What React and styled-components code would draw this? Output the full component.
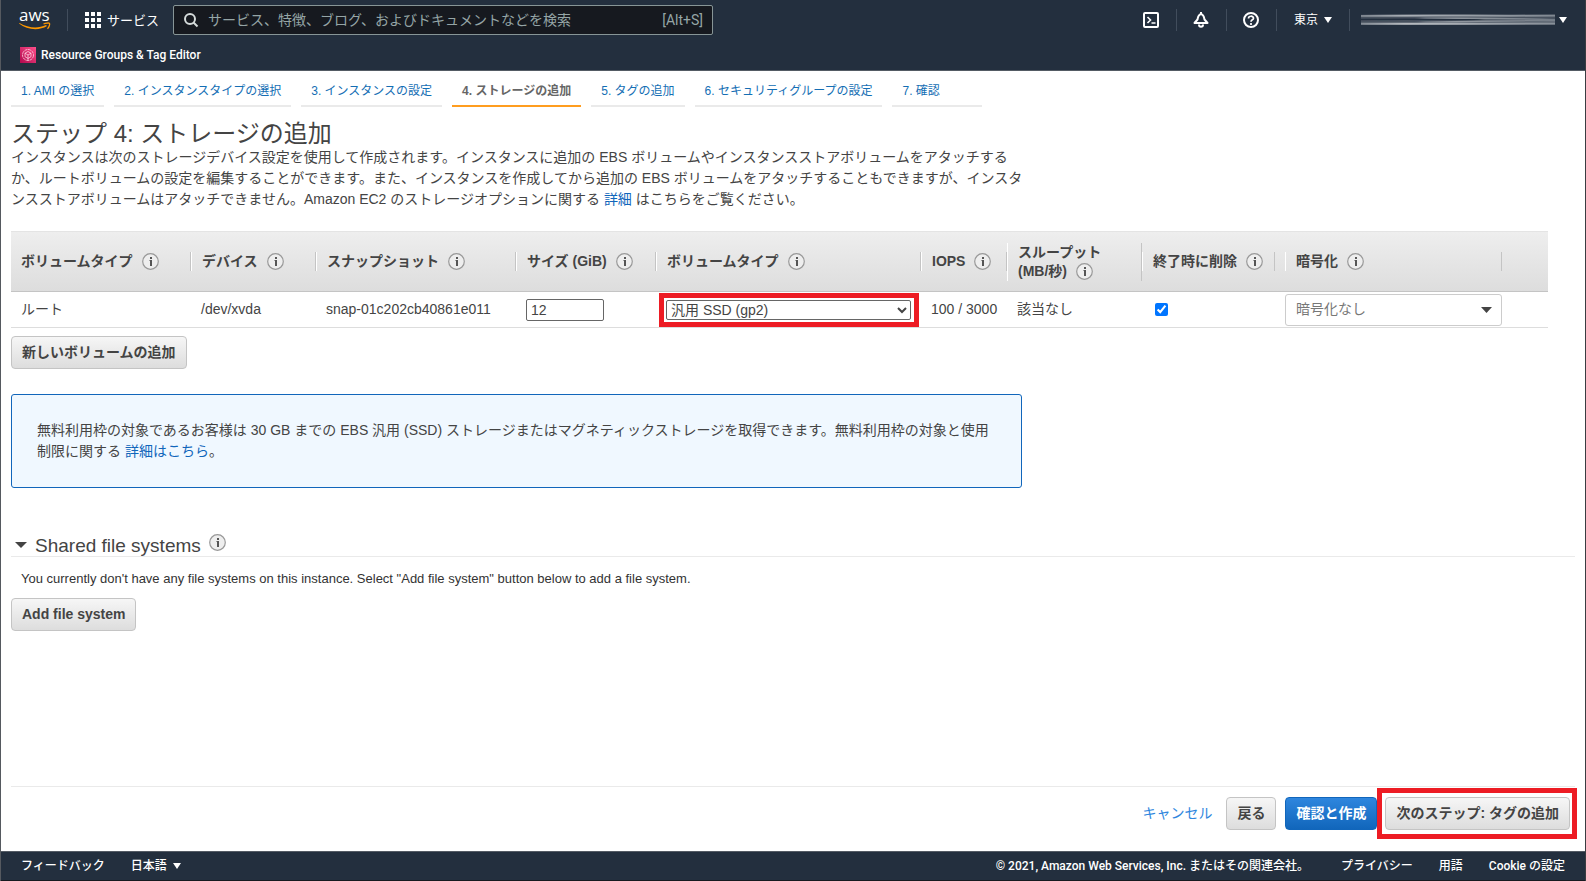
import React from 'react'
import styled, { createGlobalStyle } from 'styled-components'

const GlobalStyle = createGlobalStyle`
  * { box-sizing: border-box; }

  body {
    margin: 0;
    color: #444;
    background: #fff;
    font-family: "Liberation Sans", "Noto Sans CJK JP", sans-serif;
    font-size: 14px;
    line-height: 21px;
  }

  input, select, button { font: inherit; color: inherit; }
  a { color: #1166bb; text-decoration: none; }
  svg { display: block; flex: none; }
`

const Page = styled.div`
  display: flex;
  flex-direction: column;
  min-height: 100vh;
  border-left: 1px solid #55595f;
  border-right: 1px solid #3a3d42;
`

const navFont = 'Roboto, "Noto Sans CJK JP", sans-serif'

const Nav = styled.header`
  background: #232f3e;
  border-bottom: 1px solid #545b64;
  color: #fff;
  font-family: ${navFont};
`

const NavRow = styled.div`
  display: flex;
  align-items: center;
  height: 40px;
  padding: 0 18px;
`

const ShortcutRow = styled.div`
  display: flex;
  align-items: center;
  height: 30px;
  padding: 0 19px;
`

const Shortcut = styled.a`
  display: flex;
  align-items: center;
  gap: 5px;
  color: #fff;
  font-size: 12px;
  font-weight: 500;
`

const Divider = styled.span`
  width: 1px;
  height: 22px;
  background: #414d5c;
`

const LogoDivider = styled(Divider)`
  margin: 0 17px 0 16px;
`

const NavButton = styled.button`
  display: flex;
  align-items: center;
  gap: 6px;
  padding: 0 17px;
  border: 0;
  background: none;
  font-size: 12px;
  cursor: pointer;
`

const ServicesButton = styled(NavButton)`
  padding: 0;
  font-size: 13px;
`

const IconButton = styled(NavButton)`
  justify-content: center;
  width: 49px;
  padding: 0;
`

const AccountButton = styled(NavButton)`
  gap: 4px;
  padding: 0 0 0 11px;
`

const NavRight = styled.div`
  display: flex;
  align-items: center;
  margin-left: auto;
`

const Search = styled.label`
  display: flex;
  align-items: center;
  width: 540px;
  height: 30px;
  margin-left: 14px;
  padding: 0 9px;
  gap: 9px;
  border: 1px solid #879596;
  border-radius: 2px;
  background: #16191f;
  color: #95a5a6;
`

const SearchInput = styled.input`
  flex: 1;
  min-width: 0;
  padding: 0;
  border: 0;
  outline: 0;
  background: none;

  &::placeholder { color: #95a5a6; opacity: 1; }
`

const Steps = styled.nav`
  display: flex;
  gap: 10px;
  padding: 10px 10px 0;
  font-size: 12px;
`

const Step = styled.a`
  min-width: 90px;
  height: 26px;
  padding: 0 10px;
  border-bottom: 2px solid ${props => props.$active ? '#ff9d1f' : '#eaeaea'};
  color: ${props => props.$active ? '#666' : '#146eb4'};
  font-weight: ${props => props.$active ? 'bold' : 'normal'};
  white-space: nowrap;
`

const Main = styled.main`
  flex: 1;
  padding: 14px 10px 0;
`

const Title = styled.h1`
  margin: 0;
  font-size: 24px;
  font-weight: normal;
  line-height: 26px;
`

const Lead = styled.p`
  max-width: 1020px;
  margin: 0 0 21px;
`

const Table = styled.table`
  width: calc(100% - 27px);
  table-layout: fixed;
  border-collapse: separate;
  border-spacing: 0;
`

const Th = styled.th`
  height: 61px;
  padding: 0;
  border-top: 1px solid #e4e4e4;
  border-bottom: 1px solid #c4c4c4;
  background: linear-gradient(#eee, #ddd);
  text-align: left;
  line-height: 19px;
`

const ThLabel = styled.div`
  display: flex;
  align-items: center;
  flex-wrap: wrap;
  column-gap: 9px;
  min-height: 19px;
  margin-right: ${props => props.$gap || 0}px;
  padding-left: 10px;
  border-left: ${props => props.$first ? '0' : '1px solid #fff'};
  border-right: 1px solid #c4c4c4;
  white-space: nowrap;
`

const FullLine = styled.span`
  width: 100%;
`

const Col = styled.col`
  width: ${props => props.$width}px;
`

const Td = styled.td`
  height: 36px;
  padding: 0 0 0 ${props => props.$pad ?? 10}px;
  border-bottom: 1px solid #ddd;
`

const SizeInput = styled.input`
  display: block;
  width: 78px;
  height: 22px;
  padding: 0 4px;
  border: 1px solid #666;
  border-radius: 2px;
`

const Highlight = styled.div`
  width: fit-content;
  border: 5px solid #ed1c24;
`

const TypeHighlight = styled(Highlight)`
  width: 260px;
  height: 34px;
  padding: 2px 3px 2px 2px;
`

const TypeSelect = styled.select`
  display: block;
  width: 100%;
  height: 20px;
  padding: 0;
  border: 1px solid #666;
  border-radius: 2px;
  background: #fff;
`

const Checkbox = styled.input`
  display: block;
  width: 13px;
  height: 13px;
  margin: 0 0 0 3px;
  accent-color: #0075ff;
`

const EncryptWrap = styled.div`
  display: flex;
  align-items: center;
  height: 32px;
  padding-right: 9px;
  border: 1px solid #ccc;
  border-radius: 3px;
  color: #777;
`

const EncryptSelect = styled.select`
  flex: 1;
  height: 30px;
  padding: 0 10px;
  border: 0;
  background: none;
  appearance: none;
`

const Button = styled.button`
  height: 33px;
  padding: 0 10px;
  border: 1px solid ${props => props.$primary ? '#1166bb' : '#c4c4c4'};
  border-radius: 4px;
  background: ${props => props.$primary ? 'linear-gradient(#2e86de, #1166bb)' : 'linear-gradient(#f6f6f6, #ddd)'};
  color: ${props => props.$primary ? '#fff' : '#444'};
  font-weight: bold;
  white-space: nowrap;
  cursor: pointer;
`

const AddRow = styled.div`
  padding-top: 8px;
`

const Notice = styled.div`
  max-width: 1011px;
  margin: 25px 0 44px;
  padding: 25px;
  border: 1px solid #1166bb;
  border-radius: 3px;
  background: #f0f8ff;
`

const SectionHead = styled.h2`
  display: flex;
  align-items: center;
  gap: 8px;
  height: 25px;
  margin: 0;
  padding: 2px 0 0 4px;
  border-bottom: 1px solid #eaeaea;
  font-size: 19px;
  font-weight: normal;
`

const HeadInfo = styled.span`
  align-self: flex-start;
`

const SectionText = styled.p`
  margin: 11px 10px 9px;
  color: #333;
  font-size: 13px;
`

const Actions = styled.div`
  display: flex;
  align-items: center;
  justify-content: flex-end;
  height: 65px;
  margin: 0 10px;
  padding-bottom: 11px;
  border-top: 1px solid #eaeaea;
`

const Cancel = styled.a`
  margin-right: 14px;
  color: #2e86de;
`

const BackButton = styled(Button)`
  margin-right: 9px;
`

const NextHighlight = styled(Highlight)`
  margin-right: -2px;
  padding: 4px 2px 4px 3px;
`

const Footer = styled.footer`
  display: flex;
  align-items: center;
  gap: 26px;
  height: 30px;
  padding: 0 20px;
  border-top: 1px solid #545b64;
  border-bottom: 1px solid #16191f;
  background: #232f3e;
  color: #fff;
  font-family: ${navFont};
  font-size: 12px;
  font-weight: 500;

  a { color: #fff; }
`

const Copyright = styled.span`
  margin-left: auto;
  margin-right: 6px;
`

const LanguageButton = styled(NavButton)`
  padding: 0;
`

const Caret = ({ width = 8, height = 6, color = '#fff' }) => (
  <svg width={width} height={height} viewBox="0 0 8 6" preserveAspectRatio="none">
    <path d="M0 0h8L4 6z" fill={color} />
  </svg>
)

const InfoIcon = () => (
  <svg width="17" height="17" viewBox="0 0 17 17">
    <circle cx="8.5" cy="8.5" r="7.8" fill="#eee" stroke="#999" strokeWidth="1.2" />
    <path d="M8 4h2v2H8zM7.5 7H10v6H8V8h-.5z" fill="#555" />
  </svg>
)

const AwsLogo = () => (
  <svg width="32" height="28" viewBox="0 0 32 28">
    <text x="0" y="15" fill="#fff" fontSize="17" fontFamily="Open Sans, sans-serif">aws</text>
    <path d="M0 17.5C8 24 20 25 28 20L27 19C19 23 9 22 .5 17z" fill="#ff9900" />
    <path d="M24.500 18c2.500-1.200 5.500-1.200 6-.6s-.2 3.600-2 5.400" fill="none" stroke="#ff9900" strokeWidth="1.300" />
  </svg>
)

const GridIcon = () => (
  <svg width="16" height="16" viewBox="0 0 16 16" fill="#fff">
    {[0, 6, 12].map(y => [0, 6, 12].map(x => (
      <rect key={`${x}-${y}`} x={x} y={y} width="4" height="4" />
    )))}
  </svg>
)

const SearchIcon = () => (
  <svg width="16" height="16" viewBox="0 0 16 16" fill="none" stroke="#d5dbdb" strokeWidth="2">
    <circle cx="7" cy="7" r="5" />
    <path d="M10.500 10.500l4 4" />
  </svg>
)

const TagEditorIcon = () => (
  <svg width="16" height="16" viewBox="0 0 16 16">
    <defs>
      <linearGradient id="tagBg" x1="0" y1="1" x2="1" y2="0">
        <stop offset="0" stopColor="#b0084d" />
        <stop offset="1" stopColor="#ff4f8b" />
      </linearGradient>
    </defs>
    <rect width="16" height="16" fill="url(#tagBg)" />
    <g fill="none" stroke="#ffd3e2" strokeWidth=".8">
      <circle cx="8" cy="8" r="5.500" strokeDasharray="3 .6" />
      <path d="M8 4.500l3 1.700v3.500L8 11.500 5 9.700V6.200zM5 6.200l3 1.800 3-1.800M8 8v5.500" />
    </g>
  </svg>
)

const ShellIcon = () => (
  <svg width="16" height="16" viewBox="0 0 16 16" fill="none" stroke="#fff" strokeWidth="2">
    <rect x="1" y="1" width="14" height="14" rx="1" />
    <path d="M4.500 5l3 3-3 3M8.500 11h4" strokeWidth="1.600" />
  </svg>
)

const BellIcon = () => (
  <svg width="16" height="16" viewBox="0 0 16 16" fill="none" stroke="#fff" strokeWidth="2" strokeLinejoin="round">
    <path d="M8 2C5.500 2.500 5 4.500 4.500 7.500L1.500 11h13l-3-3.500C11 4.500 10.500 2.500 8 2z" />
    <path d="M8 0v2M6 12.500c0 3 4 3 4 0" />
  </svg>
)

const HelpIcon = () => (
  <svg width="16" height="16" viewBox="0 0 16 16" fill="none" stroke="#fff" strokeWidth="2">
    <circle cx="8" cy="8" r="7" />
    <path d="M5.500 6.500c0-3 5-3 5-.2C10.500 8 8 7.700 8 9.800M8 11v2" strokeWidth="1.700" />
  </svg>
)

// account name is smeared out on purpose
const MaskedAccount = () => (
  <svg width="194" height="14" viewBox="0 0 194 14">
    <defs>
      <linearGradient id="smear">
        <stop offset="0" stopColor="#7f8791" />
        <stop offset=".25" stopColor="#c3c7cb" />
        <stop offset="1" stopColor="#8b939c" />
      </linearGradient>
      <filter id="soft" x="0" y="-20%" width="100%" height="140%">
        <feGaussianBlur stdDeviation="3 .6" />
      </filter>
    </defs>
    <rect y="2" width="194" height="10" fill="#5f6974" opacity=".6" />
    <g filter="url(#soft)" fill="none" stroke="url(#smear)">
      <path d="M-9 3c60-1 140 0 212-.5" strokeWidth="2" opacity=".8" />
      <path d="M-9 6.500c60-.5 100 0 130 0" stroke="#232f3e" strokeWidth="1.500" />
      <path d="M60 5c50 0 90 0 143 2" strokeWidth="1.500" opacity=".6" />
      <path d="M60 9c50 0 90-2 143-1" strokeWidth="1.500" opacity=".6" />
      <path d="M-9 10.500c70 1 140-.5 212 0" strokeWidth="2" opacity=".9" />
      <path d="M74 13h28" strokeWidth="1" opacity=".5" />
    </g>
  </svg>
)

const steps = [
  '1. AMI の選択',
  '2. インスタンスタイプの選択',
  '3. インスタンスの設定',
  '4. ストレージの追加',
  '5. タグの追加',
  '6. セキュリティグループの設定',
  '7. 確認',
]

const columns = [
  { label: 'ボリュームタイプ', width: 180 },
  { label: 'デバイス', width: 125 },
  { label: 'スナップショット', width: 200 },
  { label: 'サイズ (GiB)', width: 140 },
  { label: 'ボリュームタイプ', width: 265 },
  { label: 'IOPS', width: 86 },
  { label: 'スループット', second: '(MB/秒)', width: 135 },
  { label: '終了時に削除', width: 143, gap: 10 },
  { label: '暗号化', width: 217 },
]

function App() {
  return (
    <Page>
      <GlobalStyle />
      <Nav>
        <NavRow>
          <a href="#home" aria-label="aws"><AwsLogo /></a>
          <LogoDivider />
          <ServicesButton><GridIcon />サービス</ServicesButton>
          <Search>
            <SearchIcon />
            <SearchInput aria-label="検索" placeholder="サービス、特徴、ブログ、およびドキュメントなどを検索" />
            <span>[Alt+S]</span>
          </Search>
          <NavRight>
            <IconButton aria-label="CloudShell"><ShellIcon /></IconButton>
            <Divider />
            <IconButton aria-label="通知"><BellIcon /></IconButton>
            <Divider />
            <IconButton aria-label="ヘルプ"><HelpIcon /></IconButton>
            <Divider />
            <NavButton>東京<Caret /></NavButton>
            <Divider />
            <AccountButton aria-label="アカウント"><MaskedAccount /><Caret /></AccountButton>
          </NavRight>
        </NavRow>
        <ShortcutRow>
          <Shortcut href="#tag-editor"><TagEditorIcon />Resource Groups &amp; Tag Editor</Shortcut>
        </ShortcutRow>
      </Nav>

      <Steps>
        {steps.map((step, index) => (
          <Step key={step} href={`#step${index + 1}`} $active={index === 3}>{step}</Step>
        ))}
      </Steps>

      <Main>
        <Title>ステップ 4: ストレージの追加</Title>
        <Lead>
          インスタンスは次のストレージデバイス設定を使用して作成されます。インスタンスに追加の EBS ボリュームやインスタンスストアボリュームをアタッチするか、ルートボリュームの設定を編集することができます。また、インスタンスを作成してから追加の EBS ボリュームをアタッチすることもできますが、インスタンスストアボリュームはアタッチできません。Amazon EC2 のストレージオプションに関する <a href="#more">詳細</a> はこちらをご覧ください。
        </Lead>

        <Table>
          <colgroup>
            {columns.map((col, index) => <Col key={index} $width={col.width} />)}
            <col />
          </colgroup>
          <thead>
            <tr>
              {columns.map((col, index) => (
                <Th key={index}>
                  <ThLabel $first={index === 0} $gap={col.gap}>
                    {col.second && <FullLine>{col.label}</FullLine>}
                    {col.second || col.label}
                    <InfoIcon />
                  </ThLabel>
                </Th>
              ))}
              <Th />
            </tr>
          </thead>
          <tbody>
            <tr>
              <Td>ルート</Td>
              <Td>/dev/xvda</Td>
              <Td>snap-01c202cb40861e011</Td>
              <Td><SizeInput aria-label="サイズ (GiB)" defaultValue="12" /></Td>
              <Td $pad={3}>
                <TypeHighlight>
                  <TypeSelect aria-label="ボリュームタイプ">
                    <option>汎用 SSD (gp2)</option>
                  </TypeSelect>
                </TypeHighlight>
              </Td>
              <Td>100 / 3000</Td>
              <Td>該当なし</Td>
              <Td><Checkbox type="checkbox" aria-label="終了時に削除" defaultChecked /></Td>
              <Td $pad={0}>
                <EncryptWrap>
                  <EncryptSelect aria-label="暗号化">
                    <option>暗号化なし</option>
                  </EncryptSelect>
                  <Caret width={11} color="#444" />
                </EncryptWrap>
              </Td>
              <Td />
            </tr>
          </tbody>
        </Table>
        <AddRow><Button>新しいボリュームの追加</Button></AddRow>

        <Notice>
          無料利用枠の対象であるお客様は 30 GB までの EBS 汎用 (SSD) ストレージまたはマグネティックストレージを取得できます。無料利用枠の対象と使用制限に関する <a href="#free-tier">詳細はこちら</a>。
        </Notice>

        <SectionHead>
          <Caret width={12} color="#444" />
          Shared file systems
          <HeadInfo><InfoIcon /></HeadInfo>
        </SectionHead>
        <SectionText>
          You currently don't have any file systems on this instance. Select "Add file system" button below to add a file system.
        </SectionText>
        <Button>Add file system</Button>
      </Main>

      <Actions>
        <Cancel href="#cancel">キャンセル</Cancel>
        <BackButton>戻る</BackButton>
        <Button $primary>確認と作成</Button>
        <NextHighlight>
          <Button>次のステップ: タグの追加</Button>
        </NextHighlight>
      </Actions>

      <Footer>
        <a href="#feedback">フィードバック</a>
        <LanguageButton>日本語<Caret /></LanguageButton>
        <Copyright>© 2021, Amazon Web Services, Inc. またはその関連会社。</Copyright>
        <a href="#privacy">プライバシー</a>
        <a href="#terms">用語</a>
        <a href="#cookie">Cookie の設定</a>
      </Footer>
    </Page>
  )
}

export default App
